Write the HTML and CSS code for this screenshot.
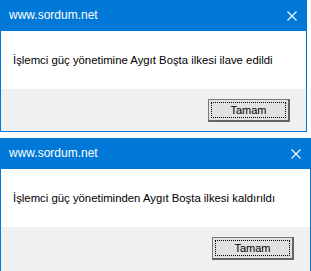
FILE: index.html
```html
<!DOCTYPE html>
<html lang="tr">
<head>
    <meta charset="UTF-8">
    <meta name="viewport" content="width=device-width, initial-scale=1.0">
    <title>sordum</title>
    <link rel="stylesheet" href="styles.css">
</head>
<body>
    <div class="dialog dialog-short">
        <div class="titlebar">
            <span class="title">www.sordum.net</span>
            <svg class="close" width="10" height="10" viewBox="0 0 10 10">
                <path d="M0.5 0.5 L9.5 9.5 M9.5 0.5 L0.5 9.5" stroke="#fff" stroke-width="1.1"/>
            </svg>
        </div>
        <div class="message">İşlemci güç yönetimine Aygıt Boşta ilkesi ilave edildi</div>
        <div class="footer">
            <button class="btn"><span class="focus">Tamam</span></button>
        </div>
    </div>
    <div class="dialog dialog-long">
        <div class="titlebar">
            <span class="title">www.sordum.net</span>
            <svg class="close" width="10" height="10" viewBox="0 0 10 10">
                <path d="M0.5 0.5 L9.5 9.5 M9.5 0.5 L0.5 9.5" stroke="#fff" stroke-width="1.1"/>
            </svg>
        </div>
        <div class="message">İşlemci güç yönetiminden Aygıt Boşta ilkesi kaldırıldı</div>
        <div class="footer">
            <button class="btn"><span class="focus">Tamam</span></button>
        </div>
    </div>
</body>
</html>
```

FILE: styles.css
```css
body {
    margin: 0;
    background-color: #fff;
    font-family: "Liberation Sans", Arial, sans-serif;
}
.dialog {
    box-sizing: border-box;
    border: 1px solid #0078d7;
    border-top: none;
    margin-bottom: 6px;
    display: flex;
    flex-direction: column;
}
.dialog-short {
    width: 307px;
}
.dialog-long {
    width: 311px;
}
.dialog-long .footer {
    height: 46px;
}
.titlebar {
    height: 31px;
    background-color: #0078d7;
    display: flex;
    align-items: center;
    justify-content: space-between;
    padding: 0 10px 0 9px;
    margin: 0 -1px;
}
.title {
    color: #fff;
    font-size: 12px;
    padding-bottom: 2px;
}
.close {
    display: block;
}
.message {
    height: 58px;
    display: flex;
    align-items: center;
    padding: 0 0 1px 12px;
    box-sizing: border-box;
    font-size: 11.35px;
    color: #000;
    background-color: #fff;
    white-space: nowrap;
}
.footer {
    height: 42px;
    background-color: #f0f0f0;
    display: flex;
    justify-content: flex-end;
    align-items: flex-start;
    padding: 10px 16px 0 0;
    box-sizing: border-box;
}
.btn {
    width: 82px;
    height: 23px;
    padding: 2px;
    background-color: #e1e1e1;
    border: 1px solid #7a7a7a;
    border-right: 2px solid #646464;
    border-bottom: 2px solid #646464;
    display: flex;
    font-family: "Liberation Sans", sans-serif;
    font-size: 11px;
    color: #000;
}
.focus {
    flex: 1;
    border: 1px dotted #000;
    display: flex;
    align-items: center;
    justify-content: center;
}
```
